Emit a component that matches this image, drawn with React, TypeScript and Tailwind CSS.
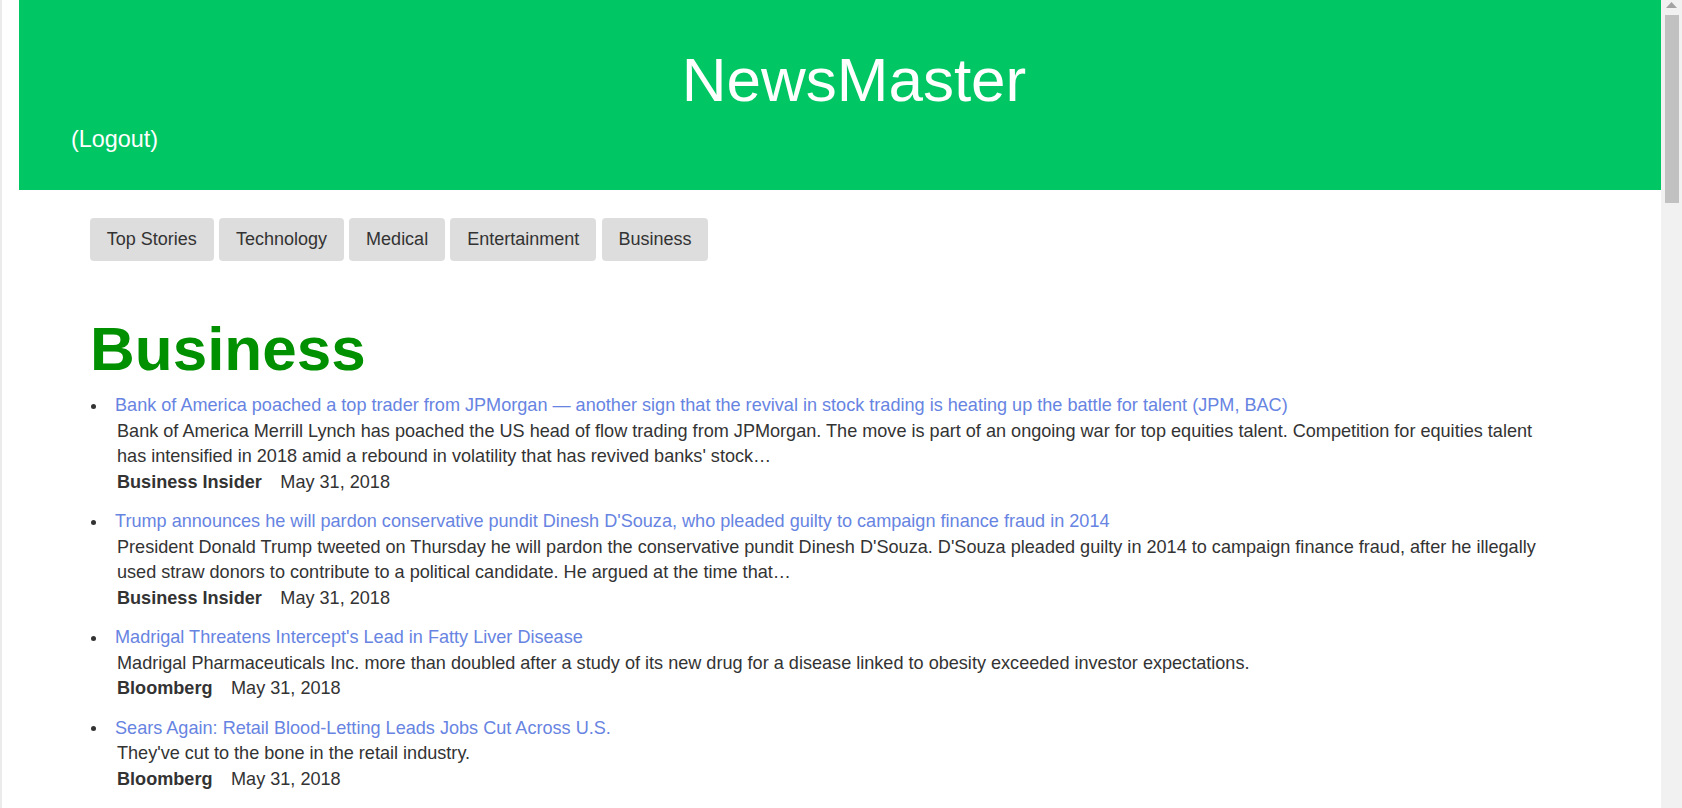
import React from "react";

type Article = {
  title: string;
  description: string;
  source: string;
  date: string;
};

const categories = ["Top Stories", "Technology", "Medical", "Entertainment", "Business"];

const articles: Article[] = [
  {
    title:
      "Bank of America poached a top trader from JPMorgan \u2014 another sign that the revival in stock trading is heating up the battle for talent (JPM, BAC)",
    description:
      "Bank of America Merrill Lynch has poached the US head of flow trading from JPMorgan. The move is part of an ongoing war for top equities talent. Competition for equities talent has intensified in 2018 amid a rebound in volatility that has revived banks' stock\u2026",
    source: "Business Insider",
    date: "May 31, 2018",
  },
  {
    title:
      "Trump announces he will pardon conservative pundit Dinesh D'Souza, who pleaded guilty to campaign finance fraud in 2014",
    description:
      "President Donald Trump tweeted on Thursday he will pardon the conservative pundit Dinesh D'Souza. D'Souza pleaded guilty in 2014 to campaign finance fraud, after he illegally used straw donors to contribute to a political candidate. He argued at the time that\u2026",
    source: "Business Insider",
    date: "May 31, 2018",
  },
  {
    title: "Madrigal Threatens Intercept's Lead in Fatty Liver Disease",
    description:
      "Madrigal Pharmaceuticals Inc. more than doubled after a study of its new drug for a disease linked to obesity exceeded investor expectations.",
    source: "Bloomberg",
    date: "May 31, 2018",
  },
  {
    title: "Sears Again: Retail Blood-Letting Leads Jobs Cut Across U.S.",
    description: "They've cut to the bone in the retail industry.",
    source: "Bloomberg",
    date: "May 31, 2018",
  },
];

/** One story in the list — linked title, blurb, and source/date line */
function ArticleItem({ article }: { article: Article }) {
  return (
    <li className="mb-[14px] grid grid-cols-[25px_1fr] leading-[25.5px]">
      <span className="ml-[0.5px] mt-[10.5px] h-[5px] w-[5px] rounded-full bg-[#333]" />
      <div>
        <a href="#" className="text-[#6784e2] no-underline">
          {article.title}
        </a>
        <p className="pl-[2px]">{article.description}</p>
        <div className="flex gap-[18.5px] pl-[2px]">
          <span className="font-bold">{article.source}</span>
          <span>{article.date}</span>
        </div>
      </div>
    </li>
  );
}

export default function App() {
  return (
    <div className="flex h-[808px] overflow-hidden bg-white font-['Liberation_Sans',Arial,sans-serif] text-[18.1px] text-[#333]">
      {/* window edge */}
      <div className="w-[2px] shrink-0 bg-[#ebebeb]" />

      <div className="min-w-0 flex-1 pl-[17px]">
        {/* Header */}
        <header className="bg-[#00c764] pb-[39px] pt-[49px] text-white">
          <h1 className="pl-[28px] text-center text-[62px] font-normal leading-none">NewsMaster</h1>
          <div className="mt-[17px] pl-[52px] text-[23.4px] leading-none">(Logout)</div>
        </header>

        <main className="pl-[71px] pr-[104px]">
          {/* Category tabs */}
          <nav className="mt-[28px] flex gap-[5.5px]">
            {categories.map((c) => (
              <button
                key={c}
                className="h-[43px] rounded-[4px] bg-[#dddddd] px-[16.8px] text-[18px] text-[#333]"
              >
                {c}
              </button>
            ))}
          </nav>

          <h2 className="mt-[57px] text-[62px] font-bold leading-none text-[#009000]">Business</h2>

          <ul className="mt-[13px]">
            {articles.map((a, i) => (
              <ArticleItem key={i} article={a} />
            ))}
          </ul>
        </main>
      </div>

      {/* Scrollbar */}
      <div className="flex w-[21px] shrink-0 flex-col items-center bg-[#f1f1f1]">
        <svg width="11" height="6" viewBox="0 0 11 6" className="mt-[2px]">
          <polygon points="5.5,0 11,6 0,6" fill="#a3a3a3" />
        </svg>
        <div className="mt-[7px] h-[188px] w-[14px] bg-[#c1c1c1]" />
      </div>
    </div>
  );
}
